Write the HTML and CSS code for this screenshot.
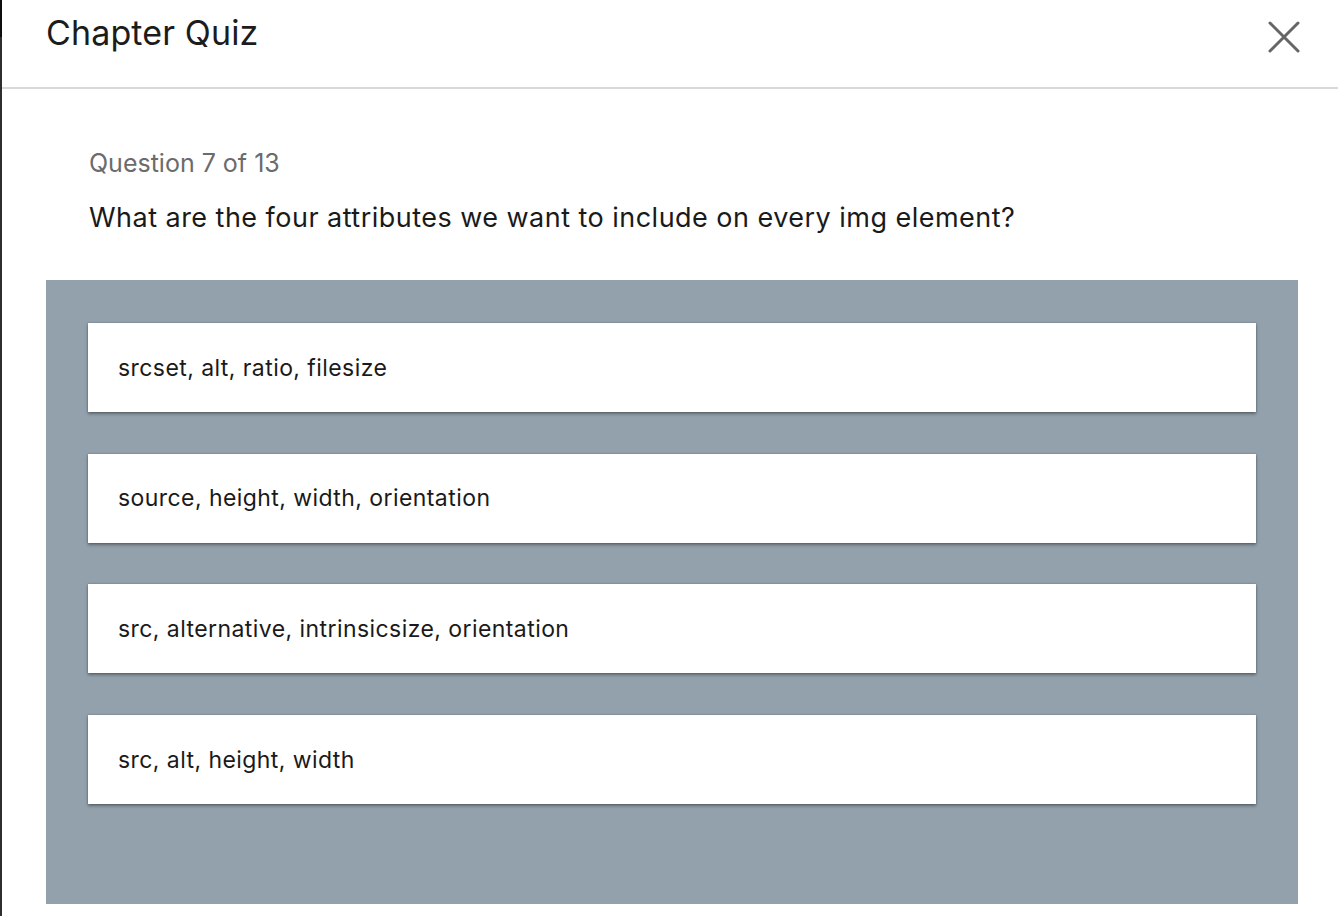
FILE: index.html
```html
<!DOCTYPE html>
<html lang="en">
<head>
<meta charset="utf-8">
<title>Chapter Quiz</title>
<link rel="stylesheet" href="styles.css">
</head>
<body>
<div class="page">
  <div class="edge"></div>
  <div class="dialog">
    <header class="header">
      <h1 class="title">Chapter Quiz</h1>
      <button class="close" aria-label="Close">
        <svg width="32" height="32" viewBox="0 0 32 32"><path d="M2 2 L30 30 M30 2 L2 30" stroke="#666" stroke-width="3" stroke-linecap="round" fill="none"/></svg>
      </button>
    </header>
    <main class="content">
      <div class="question">
        <p class="counter">Question 7 of 13</p>
        <p class="prompt">What are the four attributes we want to include on every img element?</p>
      </div>
      <div class="answers">
        <div class="answer">srcset, alt, ratio, filesize</div>
        <div class="answer">source, height, width, orientation</div>
        <div class="answer">src, alternative, intrinsicsize, orientation</div>
        <div class="answer">src, alt, height, width</div>
      </div>
    </main>
  </div>
</div>
</body>
</html>
```

FILE: styles.css
```css
html, body {
  margin: 0;
  padding: 0;
  background: #fff;
}
body {
  font-family: Inter, "Noto Sans", "Liberation Sans", sans-serif;
  color: #1a1a1a;
}
.page {
  display: flex;
  height: 916px;
  overflow: hidden;
}
.edge {
  width: 2px;
  flex: none;
  background: linear-gradient(#0d0d0d 0 37px, #2e2e2e 37px);
}
.dialog {
  flex: 1;
  display: flex;
  flex-direction: column;
}
.header {
  height: 87px;
  border-bottom: 2px solid #d9d9d9;
  display: flex;
  align-items: flex-start;
  justify-content: space-between;
  padding: 0 38px 0 44px;
}
.title {
  margin: 12px 0 0;
  font-size: 34px;
  font-weight: 400;
  color: #1c1c1c;
  letter-spacing: 0.12px;
}
.close {
  margin-top: 21px;
  border: none;
  background: none;
  padding: 0;
  width: 32px;
  height: 32px;
  cursor: pointer;
}
.close svg { display: block; }
.content {
  padding: 0 40px 0 44px;
}
.question {
  padding: 58px 43px 0;
  height: 133px;
}
.counter {
  margin: 0;
  font-size: 25px;
  line-height: 32px;
  color: #6b6b6b;
}
.prompt {
  margin: 22px 0 0;
  font-size: 27px;
  line-height: 34px;
  letter-spacing: 0.47px;
  color: #1a1a1a;
}
.answers {
  background: #93a1ac;
  padding: 43px 42px 100px;
  display: flex;
  flex-direction: column;
  gap: 41.7px;
}
.answer {
  background: #fff;
  height: 89px;
  box-sizing: border-box;
  padding: 0 30px;
  display: flex;
  align-items: center;
  font-size: 23px;
  letter-spacing: 0.43px;
  color: #1a1a1a;
  box-shadow: 0 2px 3px rgba(0,0,0,0.35), 0 0 2px rgba(0,0,0,0.25);
}
```
